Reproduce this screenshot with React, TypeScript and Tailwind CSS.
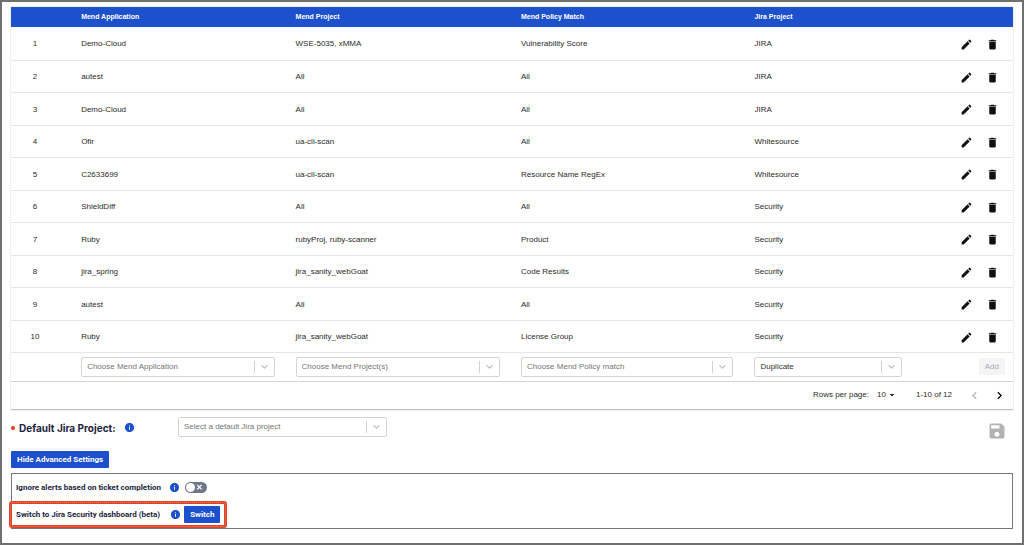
import { useState } from "react";
import type { ReactNode } from "react";
import { MdArrowDropDown, MdChevronLeft, MdChevronRight, MdDelete, MdEdit, MdInfo, MdSave } from "react-icons/md";

type Mapping = {
  application: string;
  project: string;
  policy: string;
  jira: string;
};

const mappings: Mapping[] = [
  { application: "Demo-Cloud", project: "WSE-5035, xMMA", policy: "Vulnerability Score", jira: "JIRA" },
  { application: "autest", project: "All", policy: "All", jira: "JIRA" },
  { application: "Demo-Cloud", project: "All", policy: "All", jira: "JIRA" },
  { application: "Ofir", project: "ua-cli-scan", policy: "All", jira: "Whitesource" },
  { application: "C2633699", project: "ua-cli-scan", policy: "Resource Name RegEx", jira: "Whitesource" },
  { application: "ShieldDiff", project: "All", policy: "All", jira: "Security" },
  { application: "Ruby", project: "rubyProj, ruby-scanner", policy: "Product", jira: "Security" },
  { application: "jira_spring", project: "jira_sanity_webGoat", policy: "Code Results", jira: "Security" },
  { application: "autest", project: "All", policy: "All", jira: "Security" },
  { application: "Ruby", project: "jira_sanity_webGoat", policy: "License Group", jira: "Security" },
];

function SelectBox({ label, text, filled = false, className = "" }: { label: string; text: string; filled?: boolean; className?: string }) {
  return (
    <div className={`flex h-5 items-center rounded-xs border border-[#d4d4d4] bg-white ${className}`}>
      <select
        aria-label={label}
        className={`h-full min-w-0 flex-1 appearance-none bg-transparent pl-[5px] outline-none ${filled ? "text-[#333]" : "text-[#757575]"}`}
      >
        <option>{text}</option>
      </select>
      <span className="h-3 w-px bg-[#d4d4d4]" />
      <svg viewBox="0 0 20 20" className="mx-1 size-[11px] shrink-0 fill-[#bbb]" aria-hidden="true">
        <path d="M4.5 7.5c.4-.4 1-.4 1.4 0L10 11.5l4.100-4c.4-.4 1-.4 1.400 0s.4 1 0 1.400l-4.800 4.700c-.4.4-1 .4-1.400 0L4.500 8.900c-.4-.4-.4-1 0-1.400z" />
      </svg>
    </div>
  );
}

function InfoButton({ label }: { label: string }) {
  return (
    <button aria-label={label} className="text-[#1d50cd]">
      <MdInfo className="size-[11px]" />
    </button>
  );
}

function BlueButton({ children, onClick, className = "" }: { children: ReactNode; onClick?: () => void; className?: string }) {
  return (
    <button
      onClick={onClick}
      className={`h-[17px] rounded-[1px] bg-[#1d50cd] pt-[2px] font-['Roboto',sans-serif] text-[8px] font-bold text-white ${className}`}
    >
      {children}
    </button>
  );
}

export default function App() {
  const [open, setOpen] = useState(true);
  const [ignoreAlerts, setIgnoreAlerts] = useState(false);

  return (
    <main className="min-h-screen border-2 border-[#6f6f6f] bg-white px-[9px] pt-[5px] font-['Liberation_Sans',Arial,sans-serif] text-[8px] leading-3 text-[#2b2b2b]">
      <section className="border-b border-[#c4c4c4] shadow-[0_0_1px_rgba(0,0,0,0.35)]">
        <table className="w-full table-fixed border-collapse text-left">
          <colgroup>
            <col className="w-[7%]" />
            <col className="w-[21.4%]" />
            <col className="w-[22.5%]" />
            <col className="w-[23.3%]" />
            <col className="w-[16.8%]" />
            <col className="w-[9%]" />
          </colgroup>
          <thead>
            <tr className="h-5 bg-[#1d50cd] text-[7px] text-white">
              <td />
              <th className="font-bold">Mend Application</th>
              <th className="font-bold">Mend Project</th>
              <th className="font-bold">Mend Policy Match</th>
              <th className="font-bold">Jira Project</th>
              <td />
            </tr>
          </thead>
          <tbody>
            {mappings.map((m, i) => (
              <tr key={i} className="border-b border-[#e6e6e6] odd:h-[33px] even:h-8 *:pt-[2px]">
                <td className="pr-[22px] text-center">{i + 1}</td>
                <td>{m.application}</td>
                <td>{m.project}</td>
                <td>{m.policy}</td>
                <td>{m.jira}</td>
                <td>
                  <div className="flex justify-end gap-[13px] pr-[14px] text-[#111]">
                    <button aria-label={`Edit row ${i + 1}`}>
                      <MdEdit className="size-[13px]" />
                    </button>
                    <button aria-label={`Delete row ${i + 1}`}>
                      <MdDelete className="size-[13px]" />
                    </button>
                  </div>
                </td>
              </tr>
            ))}
          </tbody>
          <tfoot>
            <tr className="h-[29px] border-b border-[#d4d4d4]">
              <td />
              <td className="pr-[21px]">
                <SelectBox label="Mend Application" text="Choose Mend Application" />
              </td>
              <td className="pr-[21px]">
                <SelectBox label="Mend Project" text="Choose Mend Project(s)" />
              </td>
              <td className="pr-[21px]">
                <SelectBox label="Mend Policy Match" text="Choose Mend Policy match" />
              </td>
              <td className="pr-[21px]">
                <SelectBox label="Jira Project" text="Duplicate" filled />
              </td>
              <td className="pr-2 text-right">
                <button disabled className="h-[17px] rounded-xs bg-[#f4f4f5] px-[6px] text-[#a9abb5]">
                  Add
                </button>
              </td>
            </tr>
          </tfoot>
        </table>

        <div className="flex h-[27px] items-center justify-end pr-[6px]">
          <label htmlFor="rows">Rows per page:</label>
          <div className="ml-2 flex items-center">
            <select id="rows" className="appearance-none outline-none">
              <option>10</option>
            </select>
            <MdArrowDropDown className="size-3" />
          </div>
          <span className="ml-[18px]">1-10 of 12</span>
          <button aria-label="Previous page" disabled className="ml-[15px] text-[#b5b5b5]">
            <MdChevronLeft className="size-[15px]" />
          </button>
          <button aria-label="Next page" className="ml-[10px] text-black">
            <MdChevronRight className="size-[15px]" />
          </button>
        </div>
      </section>

      <section className="mt-[7px] flex h-5 items-center">
        <h2 className="flex w-[167px] items-center gap-1 pt-[2px] font-['Inter',sans-serif] text-[10px] font-bold text-[#1c2340]">
          <span className="size-1 rounded-full bg-[#e53a25]" />
          <span className="mr-1">Default Jira Project:</span>
          <InfoButton label="About the default Jira project" />
        </h2>
        <SelectBox label="Default Jira Project" text="Select a default Jira project" className="w-[209px]" />
        <button aria-label="Save" disabled className="mt-2 mr-[6px] ml-auto text-[#b3b3b3]">
          <MdSave className="size-5" />
        </button>
      </section>

      <BlueButton onClick={() => setOpen(!open)} className="mt-[14px] block px-[6px]">
        {open ? "Hide" : "Show"} Advanced Settings
      </BlueButton>

      {open && (
        <section className="mt-[5px] border border-[#777] px-1 pt-2 pb-[5px] font-['Roboto',sans-serif] font-bold text-[#1c2340]">
          <div className="flex h-3 items-center">
            <label htmlFor="ignore">Ignore alerts based on ticket completion</label>
            <span className="ml-2 flex">
              <InfoButton label="About ignoring alerts" />
            </span>
            <input
              id="ignore"
              type="checkbox"
              checked={ignoreAlerts}
              onChange={e => setIgnoreAlerts(e.target.checked)}
              className="ml-[5px] flex h-[11px] w-[22px] appearance-none items-center justify-between rounded-full bg-[#6f7587] pr-1 pl-px text-[8px] leading-[9px] text-white before:size-[9px] before:rounded-full before:bg-white before:content-[''] after:content-['✕'] checked:flex-row-reverse checked:bg-[#1d50cd]"
            />
          </div>
          <div className="relative mt-3 flex h-[17px] w-fit items-center">
            {/* highlight frame */}
            <div className="pointer-events-none absolute -inset-x-[7px] -inset-y-[5px] rounded-[3px] border-[3px] border-[#e0432a]">
              <div className="absolute -inset-[2px] rounded-xs border border-dotted border-[#f07a62]" />
            </div>
            <span className="pt-[2px]">Switch to Jira Security dashboard (beta)</span>
            <span className="ml-[10px] flex">
              <InfoButton label="About the security dashboard" />
            </span>
            <BlueButton className="ml-[3px] px-[6px]">Switch</BlueButton>
          </div>
        </section>
      )}
    </main>
  );
}
